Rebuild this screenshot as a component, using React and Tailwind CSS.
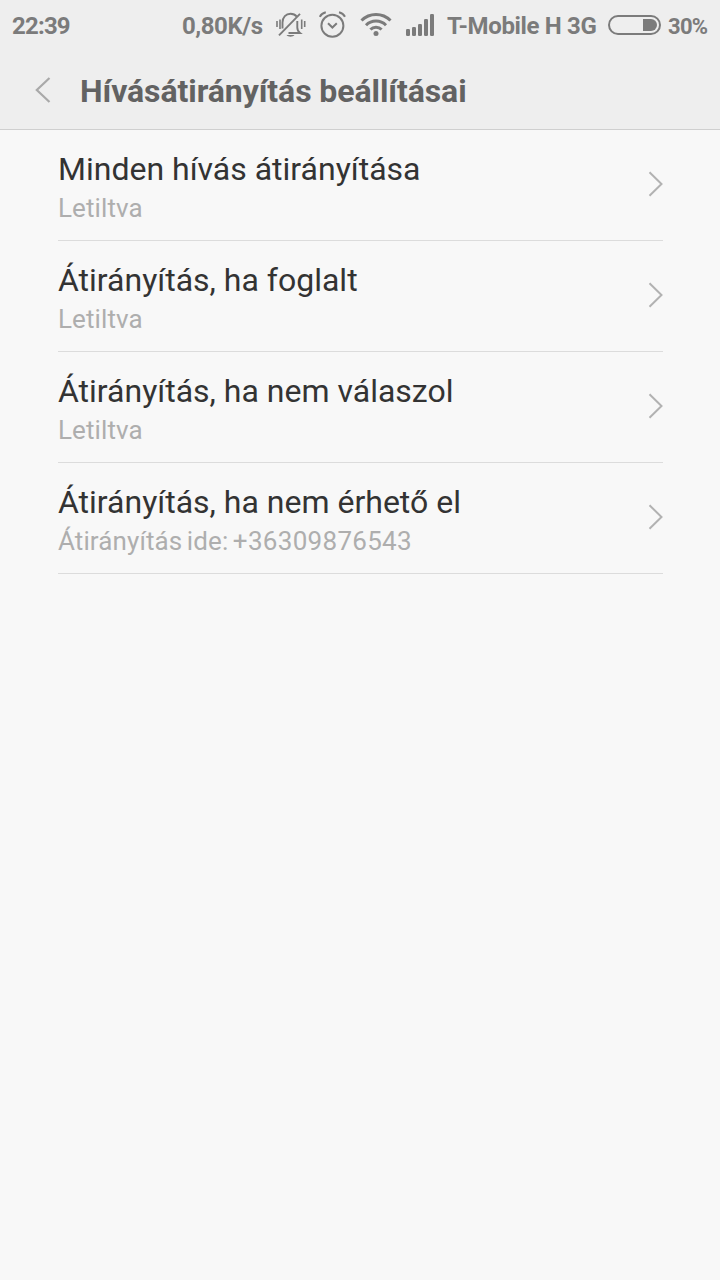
const forwardingOptions = [
  { title: 'Minden hívás átirányítása', summary: 'Letiltva' },
  { title: 'Átirányítás, ha foglalt', summary: 'Letiltva' },
  { title: 'Átirányítás, ha nem válaszol', summary: 'Letiltva' },
  { title: 'Átirányítás, ha nem érhető el', summary: 'Átirányítás ide: ', number: '+36309876543' },
];

const BellOffIcon = () => (
  <svg className="ml-[13px] shrink-0" width="30" height="26" viewBox="0 0 30 26" fill="none" stroke="currentColor" strokeWidth="1.9">
    <path d="M6.5 16.5V10.500C6.500 5 10 1.700 14.500 1.700C17 1.700 19.300 2.700 20.800 4.600" />
    <path d="M21.300 9v6.500c0 2.600 1 4.200 2.700 5.500H12.500" />
    <path d="M3 23.300L24 1.800" />
    <path d="M10.500 23h8c-1.500 2.300-6.500 2.300-8 0z" fill="currentColor" stroke="none" />
    <path d="M1 9v6M4 7.500v9.500M25.700 7.500v9.500M28.700 9v6" strokeWidth="1.6" />
  </svg>
);

const AlarmIcon = () => (
  <svg className="ml-[13px] shrink-0" width="28" height="28" viewBox="0 0 28 28" fill="none" stroke="currentColor" strokeWidth="2">
    <circle cx="13.400" cy="14.800" r="11" />
    <path d="M9 12.300L13.400 16.500L17.800 12.300" />
    <path d="M.8 5.800C2 3.500 4.200 1.900 6.800 1.300M26 5.800C24.800 3.500 22.600 1.900 20 1.300" />
  </svg>
);

const WifiIcon = () => (
  <svg className="ml-[13px] shrink-0" width="32" height="26" viewBox="0 0 32 26" fill="none" stroke="currentColor" strokeWidth="3">
    <path d="M1.5 8.5C9.5 .5 22.500 .5 30.500 8.5" />
    <path d="M6 13.200C11.500 7.700 20.500 7.700 26 13.200" />
    <path d="M10.400 17.500C13.500 14.400 18.500 14.400 21.600 17.500" />
    <circle cx="16" cy="21.500" r="2.500" fill="currentColor" stroke="none" />
  </svg>
);

const SignalIcon = () => (
  <svg className="ml-[14px] shrink-0" width="29" height="24" viewBox="0 0 29 24" fill="currentColor">
    <rect x="0" y="16" width="4" height="7" rx="1.2" />
    <rect x="6" y="14" width="4" height="9" rx="1.2" />
    <rect x="12" y="11" width="4" height="12" rx="1.2" />
    <rect x="18" y="6" width="4" height="17" rx="1.2" />
    <rect x="24" y="1" width="4" height="22" rx="1.2" />
  </svg>
);

const BatteryIcon = () => (
  <svg className="ml-[11px] shrink-0" width="53" height="20" viewBox="0 0 53 20" fill="none">
    <rect x="1" y="1" width="51" height="18" rx="9" stroke="currentColor" strokeWidth="2" />
    <path d="M35 4h8a6 6 0 0 1 0 12h-8z" fill="currentColor" />
  </svg>
);

const StatusBar = () => (
  <div className="flex h-[50px] items-center pl-3 text-[24px] font-bold whitespace-nowrap text-[#7b7b7b]">
    <span className="w-[170px] pt-0.5 tracking-[-0.8px]">22:39</span>
    <span className="w-[81px] pt-0.5 tracking-[-0.45px]">0,80K/s</span>
    <BellOffIcon />
    <AlarmIcon />
    <WifiIcon />
    <SignalIcon />
    <span className="ml-3 w-[150px] pt-0.5 tracking-[-0.35px]">T-Mobile H 3G</span>
    <BatteryIcon />
    <span className="ml-[7px] pt-0.5 text-[22px] tracking-[-0.7px]">30%</span>
  </div>
);

const OptionRow = ({ title, summary, number }) => (
  <li className="flex h-[111px] items-center justify-between border-b border-[#dcdcdc]">
    <div className="pt-1.5">
      <div className="text-[32px] leading-[40px] text-[#333333]">{title}</div>
      <div className="text-[26px] leading-[38px] tracking-[0.1px] text-[#aeaeae] [word-spacing:-2px]">
        {summary}
        {number && <span className="tracking-[0.3px]">{number}</span>}
      </div>
    </div>
    <svg className="mb-0.5" width="15" height="26" viewBox="0 0 15 26" fill="none" stroke="#b2b2b2" strokeWidth="2">
      <path d="M1.500 1.200L13.500 13L1.500 24.800" />
    </svg>
  </li>
);

export default function App() {
  return (
    <div className="min-h-screen bg-[#f8f8f8] font-['Roboto',sans-serif]">
      <header className="h-[130px] border-b border-[#cfcfcf] bg-[#eeeeee]">
        <StatusBar />
        <div className="flex h-20 items-center pl-[35px]">
          <svg width="16" height="26" viewBox="0 0 16 26" fill="none" stroke="#a9a9a9" strokeWidth="2.200">
            <path d="M14.500 1L1.800 13L14.500 25" />
          </svg>
          <h1 className="ml-[29px] pt-0.5 text-[32px] font-bold tracking-[-0.08px] text-[#626262]">Hívásátirányítás beállításai</h1>
        </div>
      </header>
      <ul className="mr-[57px] ml-[58px]">
        {forwardingOptions.map((option) => (
          <OptionRow key={option.title} {...option} />
        ))}
      </ul>
    </div>
  );
}
